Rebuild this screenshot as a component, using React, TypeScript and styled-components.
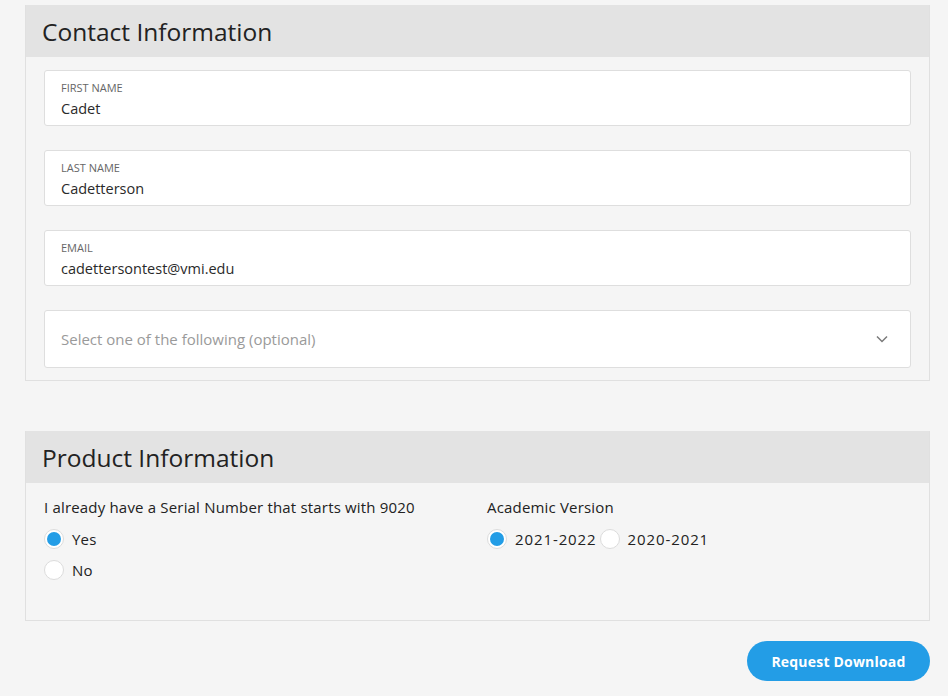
import React from "react";
import styled, { createGlobalStyle } from "styled-components";

const Global = createGlobalStyle`
  html, body { margin: 0; padding: 0; background: #f5f5f5; }
  body { font-family: "Open Sans", "Noto Sans", sans-serif; color: #222; }
  * { box-sizing: border-box; }
`;

const Page = styled.div`
  padding: 5px 18px 15px 25px;
  display: flex;
  flex-direction: column;
`;

const Card = styled.section<{ $mt?: number }>`
  border: 1px solid #e0e0e0;
  border-top: none;
  background: #f5f5f5;
  margin-top: ${(p) => p.$mt ?? 0}px;
`;

const CardHeader = styled.h2`
  margin: 0;
  background: #e3e3e3;
  height: 52px;
  display: flex;
  align-items: center;
  padding: 0 16px;
  font-weight: 400;
  font-size: 24.5px;
  color: #222;
`;

const ContactBody = styled.div`
  padding: 13px 18px 12px 18px;
  display: flex;
  flex-direction: column;
  gap: 24px;
`;

const Field = styled.div`
  background: #fff;
  border: 1px solid #dedede;
  border-radius: 3px;
  height: 56px;
  padding: 10px 16px 0 16px;
  display: flex;
  flex-direction: column;
`;

const FieldLabel = styled.div`
  font-size: 11px;
  text-transform: uppercase;
  color: #666;
  line-height: 14px;
`;

const FieldValue = styled.div`
  font-size: 14.5px;
  color: #2a2a2a;
  line-height: 22px;
  margin-top: 3px;
`;

const Select = styled.div`
  background: #fff;
  border: 1px solid #dedede;
  border-radius: 3px;
  height: 58px;
  padding: 0 22px 0 16px;
  display: flex;
  align-items: center;
  justify-content: space-between;
  font-size: 15px;
  color: #9a9a9a;
`;

const ProductBody = styled.div`
  padding: 15px 18px 0 18px;
  height: 137px;
  display: grid;
  grid-template-columns: 443px 1fr;
`;

const Group = styled.div`
  display: flex;
  flex-direction: column;
`;

const Question = styled.div`
  font-size: 15px;
  letter-spacing: 0.18px;
  line-height: 18px;
  color: #222;
  margin-bottom: 13px;
`;

const Options = styled.div<{ $row?: boolean }>`
  display: flex;
  flex-direction: ${(p) => (p.$row ? "row" : "column")};
  gap: ${(p) => (p.$row ? "3px" : "11px")};
`;

const Option = styled.label<{ $wide?: boolean }>`
  display: flex;
  align-items: center;
  gap: 8px;
  font-size: 15px;
  letter-spacing: ${(p) => (p.$wide ? "0.9px" : "0.2px")};
  color: #222;
  height: 20px;
`;

const Radio = styled.span<{ $on?: boolean }>`
  width: 20px;
  height: 20px;
  flex: none;
  border-radius: 50%;
  border: 1px solid #dcdcdc;
  background: #fff;
  display: inline-flex;
  align-items: center;
  justify-content: center;
  &::after {
    content: "";
    width: 14px;
    height: 14px;
    border-radius: 50%;
    background: ${(p) => (p.$on ? "#239de6" : "transparent")};
  }
`;

const Actions = styled.div`
  display: flex;
  justify-content: flex-end;
  padding-top: 20px;
`;

const Button = styled.button`
  width: 183px;
  height: 40px;
  border: none;
  border-radius: 20px;
  background: #239de6;
  color: #fff;
  font-family: inherit;
  font-weight: 700;
  font-size: 14px;
  letter-spacing: 0.2px;
  cursor: pointer;
`;

const Chevron = () => (
  <svg width="12" height="8" viewBox="0 0 12 8" fill="none">
    <path d="M1 1.5 6 6.5 11 1.5" stroke="#7a7a7a" strokeWidth="1.5" />
  </svg>
);

export default function App() {
  return (
    <>
      <Global />
      <Page>
        <Card>
          <CardHeader>Contact Information</CardHeader>
          <ContactBody>
            <Field>
              <FieldLabel>First Name</FieldLabel>
              <FieldValue>Cadet</FieldValue>
            </Field>
            <Field>
              <FieldLabel>Last Name</FieldLabel>
              <FieldValue>Cadetterson</FieldValue>
            </Field>
            <Field>
              <FieldLabel>Email</FieldLabel>
              <FieldValue>cadettersontest@vmi.edu</FieldValue>
            </Field>
            <Select>
              <span>Select one of the following (optional)</span>
              <Chevron />
            </Select>
          </ContactBody>
        </Card>
        <Card $mt={50}>
          <CardHeader>Product Information</CardHeader>
          <ProductBody>
            <Group>
              <Question>I already have a Serial Number that starts with 9020</Question>
              <Options>
                <Option><Radio $on />Yes</Option>
                <Option><Radio />No</Option>
              </Options>
            </Group>
            <Group>
              <Question>Academic Version</Question>
              <Options $row>
                <Option $wide><Radio $on />2021-2022</Option>
                <Option $wide><Radio />2020-2021</Option>
              </Options>
            </Group>
          </ProductBody>
        </Card>
        <Actions>
          <Button>Request Download</Button>
        </Actions>
      </Page>
    </>
  );
}
